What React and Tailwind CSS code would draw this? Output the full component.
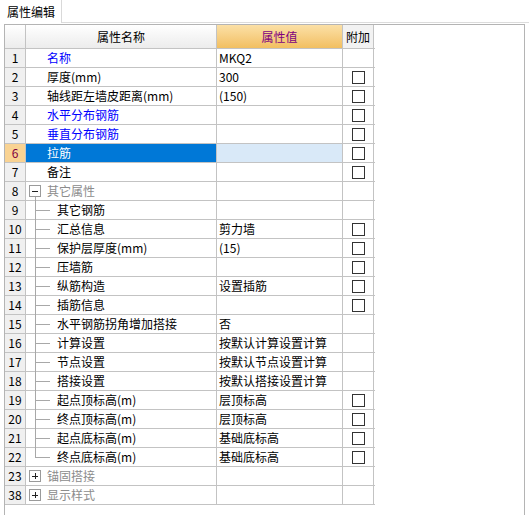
import React from 'react';

const rows = [
  { n: 1, name: '名称', value: 'MKQ2', blue: true },
  { n: 2, name: '厚度(mm)', value: '300', check: true },
  { n: 3, name: '轴线距左墙皮距离(mm)', value: '(150)', check: true },
  { n: 4, name: '水平分布钢筋', value: '', blue: true, check: true },
  { n: 5, name: '垂直分布钢筋', value: '', blue: true, check: true },
  { n: 6, name: '拉筋', value: '', selected: true, check: true },
  { n: 7, name: '备注', value: '', check: true },
  { n: 8, name: '其它属性', value: '', group: 'open' },
  { n: 9, name: '其它钢筋', value: '', child: true },
  { n: 10, name: '汇总信息', value: '剪力墙', child: true, check: true },
  { n: 11, name: '保护层厚度(mm)', value: '(15)', child: true, check: true },
  { n: 12, name: '压墙筋', value: '', child: true, check: true },
  { n: 13, name: '纵筋构造', value: '设置插筋', child: true, check: true },
  { n: 14, name: '插筋信息', value: '', child: true, check: true },
  { n: 15, name: '水平钢筋拐角增加搭接', value: '否', child: true },
  { n: 16, name: '计算设置', value: '按默认计算设置计算', child: true },
  { n: 17, name: '节点设置', value: '按默认节点设置计算', child: true },
  { n: 18, name: '搭接设置', value: '按默认搭接设置计算', child: true },
  { n: 19, name: '起点顶标高(m)', value: '层顶标高', child: true, check: true },
  { n: 20, name: '终点顶标高(m)', value: '层顶标高', child: true, check: true },
  { n: 21, name: '起点底标高(m)', value: '基础底标高', child: true, check: true },
  { n: 22, name: '终点底标高(m)', value: '基础底标高', child: true, check: true, last: true },
  { n: 23, name: '锚固搭接', value: '', group: 'closed' },
  { n: 38, name: '显示样式', value: '', group: 'closed' },
];

const Box = ({ open }) => (
  <span className="relative w-[12px] h-[12px] border border-[#9a9a9a] bg-white shrink-0">
    <span className="absolute left-[2px] top-[5px] w-[6px] h-px bg-[#222]" />
    {!open && <span className="absolute left-[5px] top-[2px] w-px h-[6px] bg-[#222]" />}
  </span>
);

const Row = ({ r }) => {
  const numCls = r.selected
    ? 'bg-[#f9d393] text-[#800040]'
    : 'bg-[#f0f0f0] text-black';
  const nameCls = r.selected
    ? 'bg-[#0078d7] text-white'
    : r.blue
    ? 'text-[#0000ff]'
    : r.group
    ? 'text-[#8c8c8c]'
    : 'text-black';
  return (
    <div className="flex h-[19px] border-b border-[#c3c3c3]">
      <div className={`w-[21px] shrink-0 border-r border-[#c3c3c3] flex items-center justify-center text-[12px] ${numCls}`}>
        {r.n}
      </div>
      <div className={`relative w-[191px] shrink-0 border-r border-[#c3c3c3] flex items-center ${nameCls}`}>
        {r.group && (
          <span className="absolute left-[3px] top-[3px] flex">
            <Box open={r.group === 'open'} />
          </span>
        )}
        {r.group === 'open' && (
          <span className="absolute left-[9px] top-[15px] -bottom-px w-px bg-[#a8a8a8]" />
        )}
        {r.child && (
          <>
            <span className={`absolute left-[9px] top-0 w-px bg-[#a8a8a8] ${r.last ? 'h-[9px]' : '-bottom-px'}`} />
            <span className="absolute left-[9px] top-[9px] w-[15px] h-px bg-[#a8a8a8]" />
          </>
        )}
        <span className={r.child ? 'pl-[31px]' : 'pl-[21px]'}>{r.name}</span>
      </div>
      <div className={`w-[126px] shrink-0 border-r border-[#c3c3c3] flex items-center pl-[2px] ${r.selected ? 'bg-[#d9e9f8]' : ''}`}>
        {r.value}
      </div>
      <div className="w-[31px] shrink-0 border-r border-[#c3c3c3] flex items-center justify-center">
        {r.check && <span className="w-[13px] h-[13px] border border-[#333] bg-white" />}
      </div>
    </div>
  );
};

export default function App() {
  return (
    <div
      className="w-[529px] h-[515px] bg-white overflow-hidden text-[12px] leading-none text-black"
      style={{ fontFamily: '"Noto Sans CJK SC", "Liberation Sans", sans-serif' }}
    >
      {/* tab strip */}
      <div className="flex h-[24px]">
        <div className="w-[62px] h-[23px] border-r border-[#d9d9d9] flex items-center pl-[7px] text-[12px]">
          属性编辑
        </div>
        <div className="flex-1 border-b border-[#dcdcdc] mb-px" />
      </div>

      {/* panel */}
      <div className="ml-[4px] w-[521px] h-[491px] border-l border-r border-t border-[#b4b4b4] flex">
        <div className="w-[370px] flex flex-col">
          <div className="flex h-[24px] border-b border-[#c3c3c3]">
            <div className="w-[21px] shrink-0 border-r border-[#c3c3c3] bg-gradient-to-b from-white to-[#ececec]" />
            <div className="w-[191px] shrink-0 border-r border-[#c3c3c3] bg-gradient-to-b from-white to-[#ececec] flex items-center justify-center">
              属性名称
            </div>
            <div className="w-[126px] shrink-0 border-r border-[#c3c3c3] bg-gradient-to-b from-[#fbe0a6] to-[#f2bf60] flex items-center justify-center text-[#800080]">
              属性值
            </div>
            <div className="w-[31px] shrink-0 border-r border-[#c3c3c3] bg-[#f2f2f2] flex items-center justify-center">
              附加
            </div>
          </div>
          {rows.map((r) => (
            <Row key={r.n} r={r} />
          ))}
        </div>
        <div className="flex-1" />
      </div>
    </div>
  );
}
